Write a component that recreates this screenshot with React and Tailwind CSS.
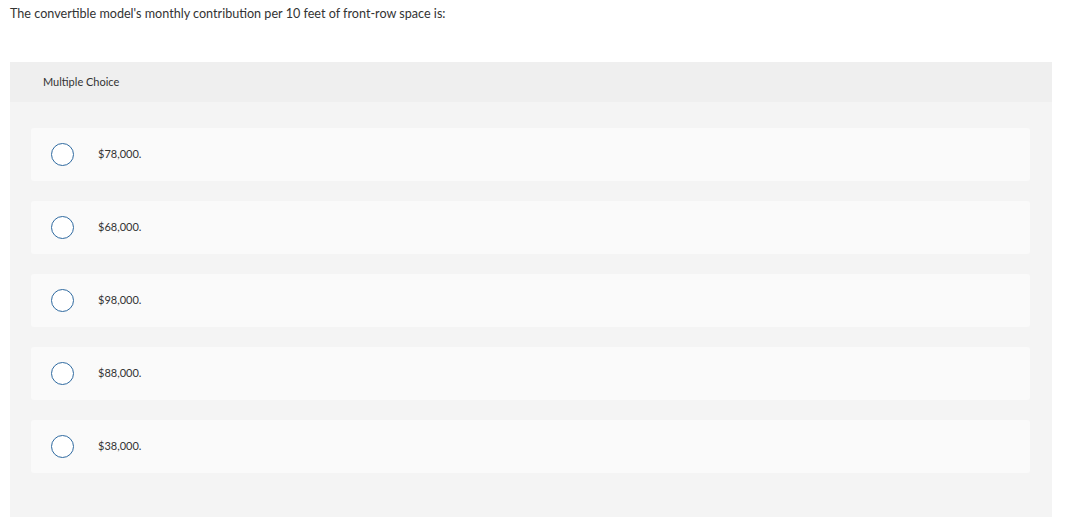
export default function App() {
  const options = ["$78,000.", "$68,000.", "$98,000.", "$88,000.", "$38,000."];
  return (
    <div className="w-[1072px] h-[517px] bg-white overflow-hidden" style={{ fontFamily: "Lato, 'Open Sans', sans-serif" }}>
      <div className="pt-[6px] pl-[10px] text-[12.6px] leading-[16px] text-[#333]">
        The convertible model's monthly contribution per 10 feet of front-row space is:
      </div>
      <div className="mt-[40px] ml-[10px] w-[1042px] h-[460px] bg-[#f4f4f4]">
        <div className="h-[40px] bg-[#efefef] flex items-center pl-[33px] text-[11px] text-[#333]">
          Multiple Choice
        </div>
        <div className="flex flex-col gap-[20px] pt-[26px] pl-[21px] w-[1020px]">
          {options.map((o) => (
            <div key={o} className="h-[53px] bg-[#fafafa] rounded-[3px] flex items-center pl-[20px]">
              <div className="w-[23px] h-[23px] rounded-full border-[1.5px] border-[#2f6aa0] bg-white" />
              <span className="ml-[24px] text-[11px] text-[#333]">{o}</span>
            </div>
          ))}
        </div>
      </div>
    </div>
  );
}
